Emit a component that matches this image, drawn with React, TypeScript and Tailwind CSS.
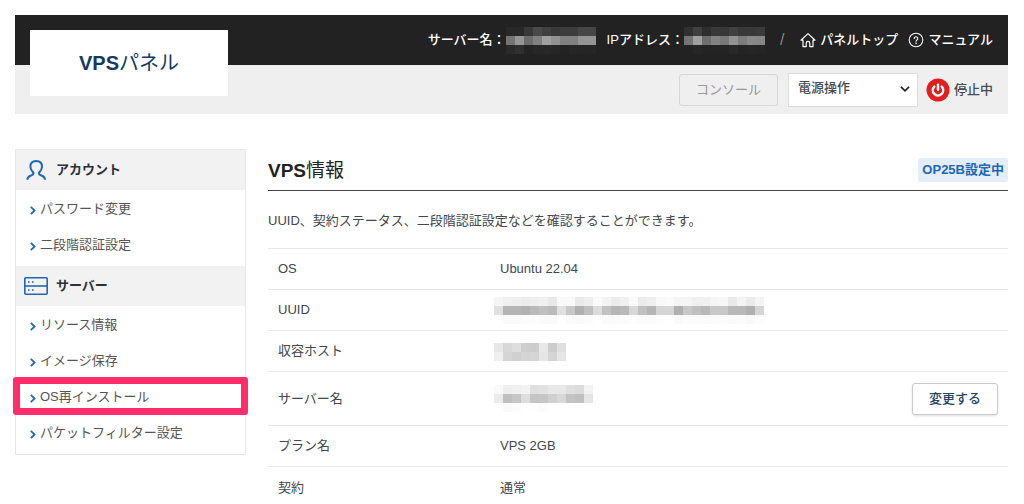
import { useState } from 'react';
import type { ReactNode } from 'react';

// Masked values, one hex grey level per block
const masks = {
  headerName: [
    '28 28 38 4a 40 38 3c 3c 46 46',
    '74 96 6c 80 a0 92 80 80 94 94',
    '2a 30 24 27 28 26 23 26 25 25',
  ],
  headerIp: [
    '30 40 2e 38 36 40 38 38 3a',
    '74 a0 6e 82 78 92 7c 88 86',
    '22 26 24 24 24 28 24 25 24',
  ],
  uuid: [
    'f5 f0 ee eb ee f0 e8 f9 f9 e9 ee fb f3 eb f0 fa eb ef f9 fb f5 f5 f0 f0 f5 f7 ea f4 eb f4',
    'e0 b5 b5 b2 ba bf ba e0 c8 b0 c0 dc c2 b6 ba d8 c0 b6 d5 d5 b0 c8 c0 b9 c8 c8 b8 b8 b0 d5',
    'ff fa fa fb fc fa fa ff fb f9 fc ff fb fa fb fd fb fb fd ff f9 fc fb fa fb fc fa fb f9 fc',
  ],
  host: ['e8 d8 de ce cc e8 cc df', 'ef d5 d0 d4 d5 e6 d5 e6'],
  serverName: [
    'f9 ee f0 f3 df e2 e8 e8 df dc f2',
    'eb c0 c6 de c5 c6 d0 d8 c3 c0 e5',
    'ff fa fc ff fe fb ff ff ff ff ff',
  ],
};

function Masked({ rows, label }: { rows: string[]; label: string }) {
  return (
    <span role="img" aria-label={label} className="inline-flex flex-col align-middle">
      {rows.map((row, y) => (
        <span key={y} className="flex">
          {row.split(' ').map((c, x) => (
            <span key={x} className="h-[9px] w-[9px]" style={{ backgroundColor: `#${c}${c}${c}` }} />
          ))}
        </span>
      ))}
    </span>
  );
}

function HomeIcon() {
  return (
    <svg className="h-4 w-4" viewBox="0 0 16 16" fill="none" stroke="currentColor" strokeWidth="1.2" strokeLinejoin="round" strokeLinecap="round">
      <path d="M3 8.200H1L8 1.600l7 6.600h-2v6.400H9.800v-3.400a1.800 1.800 0 0 0-3.600 0v3.400H3z" />
    </svg>
  );
}

function HelpIcon() {
  return (
    <svg className="h-4 w-4" viewBox="0 0 16 16" fill="none" stroke="currentColor" strokeWidth="1.1" strokeLinecap="round">
      <circle cx="8" cy="8" r="6.8" />
      <path d="M6.200 6.600a1.800 1.800 0 1 1 2.700 1.500c-.6.4-.9.700-.9 1.200" />
      <circle cx="8" cy="11.300" r=".3" fill="currentColor" />
    </svg>
  );
}

function PowerIcon() {
  return (
    <svg className="h-6 w-6" viewBox="0 0 24 24" fill="none" stroke="#fff" strokeWidth="2.4" strokeLinecap="round">
      <circle cx="12" cy="12" r="11.5" fill="#e0201f" stroke="none" />
      <path d="M8.3 8.6a5.2 5.2 0 1 0 7.4 0" />
      <path d="M12 6.6v5.2" />
    </svg>
  );
}

function UserIcon() {
  return (
    <svg className="h-6 w-6" viewBox="0 0 24 24" fill="none" stroke="#1f66b3" strokeWidth="2" strokeLinejoin="round">
      <path d="M3.400 21.800c0-2.600 1-3.400 3.100-4.100 1.800-.6 3-1.100 3-2.400 0-.9-.5-1.300-1.300-2.100C7 12 6.400 10.600 6.400 8.600 6.400 5 8.600 3 12.200 3S18 5 18 8.600c0 2-.6 3.400-1.800 4.600-.8.800-1.300 1.200-1.300 2.100 0 1.300 1.200 1.800 3 2.400 2.100.7 3.100 1.500 3.100 4.100" />
    </svg>
  );
}

function ServerIcon() {
  return (
    <svg className="h-6 w-6" viewBox="0 0 24 24" fill="none" stroke="#1f66b3" strokeWidth="1.6">
      <rect x="0.800" y="3.800" width="22.400" height="16.400" rx="1" />
      <path d="M1 12h22" />
      <path d="M4 8h1.600M8 8h1.600M4 16h1.600M8 16h1.600" />
    </svg>
  );
}

function ChevronIcon() {
  return (
    <svg className="mt-0.5 h-[9px] w-1.5" viewBox="0 0 6 9" fill="none" stroke="#2468b4" strokeWidth="1.8">
      <path d="M.8.800 4.600 4.500.8 8.200" />
    </svg>
  );
}

const menu = [
  { title: 'アカウント', icon: <UserIcon />, items: ['パスワード変更', '二段階認証設定'] },
  {
    title: 'サーバー',
    icon: <ServerIcon />,
    items: ['リソース情報', 'イメージ保存', 'OS再インストール', 'パケットフィルター設定'],
  },
];

const HIGHLIGHTED = 'OS再インストール';

function Header() {
  const [power, setPower] = useState('');

  return (
    <header className="relative">
      <div className="flex h-[50px] items-center justify-end bg-[#222] pr-[15px] text-[13px] font-medium text-white">
        <span>サーバー名：</span>
        <Masked rows={masks.headerName} label="サーバー名" />
        <span className="ml-[11px]">IPアドレス：</span>
        <Masked rows={masks.headerIp} label="IPアドレス" />
        <span className="mr-4 ml-[15px] text-base text-[#888]">/</span>
        <a href="#top" className="flex items-center gap-1">
          <HomeIcon />
          パネルトップ
        </a>
        <a href="#manual" className="ml-[10px] flex items-center gap-1">
          <HelpIcon />
          マニュアル
        </a>
      </div>

      <div className="flex h-[49px] items-center justify-end bg-[#efefef] pr-[15px] text-[13px] text-[#444b52]">
        <button type="button" disabled className="h-8 rounded-[3px] border border-[#d6d6d6] px-4 text-[#999]">
          コンソール
        </button>
        <div className="relative ml-[10px]">
          <select
            aria-label="電源操作"
            value={power}
            onChange={(e) => setPower(e.target.value)}
            className="h-[34px] w-[130px] appearance-none border border-[#ddd] bg-white pb-1 pl-[9px] font-medium"
          >
            <option value="">電源操作</option>
            <option value="start">起動</option>
            <option value="stop">停止</option>
          </select>
          <svg className="pointer-events-none absolute top-3 right-2 h-2 w-[10px]" viewBox="0 0 10 8" fill="none" stroke="#222" strokeWidth="1.700">
            <path d="M1 1.800 5 5.800 9 1.800" />
          </svg>
        </div>
        <span className="ml-2 flex items-center gap-1 font-medium">
          <PowerIcon />
          停止中
        </span>
      </div>

      {/* Logo plate sits over both bars */}
      <a
        href="#"
        className="absolute top-[15px] left-[15px] flex h-[66px] w-[198px] items-center justify-center bg-white text-[20px] text-[#163a5f]"
      >
        <b>VPS</b>パネル
      </a>
    </header>
  );
}

function Sidebar() {
  return (
    <nav className="w-[231px] shrink-0 border border-[#e8e8e8]">
      {menu.map((section) => (
        <section key={section.title}>
          <h2 className="flex h-10 items-center gap-2 bg-[#f2f2f2] pl-2 text-[13px] font-bold text-[#2b3138]">
            {section.icon}
            {section.title}
          </h2>
          <ul className="pt-px pb-[3px]">
            {section.items.map((item) => (
              <li key={item} className="relative">
                <a href="#" className="flex h-9 items-center gap-1 pl-[14px] text-[13px] text-[#555]">
                  <ChevronIcon />
                  {item}
                </a>
                {item === HIGHLIGHTED && (
                  <span className="pointer-events-none absolute -inset-x-[3px] -top-0.5 bottom-0 rounded-[3px] border-[7px] border-[#ff2d6c]" />
                )}
              </li>
            ))}
          </ul>
        </section>
      ))}
    </nav>
  );
}

function Row({ label, tall, children }: { label: string; tall?: boolean; children: ReactNode }) {
  return (
    <tr className="border-t border-[#e8e8e8]">
      <th scope="row" className="w-[30%] pl-[10px] text-left font-normal">
        {label}
      </th>
      <td className={tall ? 'h-[54px] px-[10px]' : 'h-[41px] px-[10px]'}>{children}</td>
    </tr>
  );
}

export default function App() {
  return (
    <div className="bg-white pt-[15px] pr-4 pl-[15px] font-['Liberation_Sans','Noto_Sans_CJK_JP',sans-serif]">
      <Header />

      <div className="mt-[35px] flex items-start gap-[22px]">
        <Sidebar />

        <main className="min-w-0 flex-1 text-[13px] text-[#40474e]">
          <div className="flex h-[42px] items-center justify-between border-b border-[#444]">
            <h1 className="pt-[3px] text-[19px] text-[#222]">
              <b>VPS</b>情報
            </h1>
            <span className="rounded-[2px] bg-[#e4eef9] px-1 py-0.5 leading-5 font-bold text-[#1f66b3]">
              OP25B設定中
            </span>
          </div>

          <p className="pt-5 pb-[17px] leading-5">UUID、契約ステータス、二段階認証設定などを確認することができます。</p>

          <table className="w-full border-collapse">
            <tbody>
              <Row label="OS">Ubuntu 22.04</Row>
              <Row label="UUID">
                <span className="-ml-1.5">
                  <Masked rows={masks.uuid} label="UUID" />
                </span>
              </Row>
              <Row label="収容ホスト">
                <span className="-ml-1.5">
                  <Masked rows={masks.host} label="収容ホスト" />
                </span>
              </Row>
              <Row label="サーバー名" tall>
                <div className="flex items-center justify-between">
                  <span className="-ml-1.5">
                    <Masked rows={masks.serverName} label="サーバー名" />
                  </span>
                  <button
                    type="button"
                    className="h-8 rounded-[3px] border border-[#ccc] bg-white px-4 font-medium text-[#1f4468] shadow"
                  >
                    変更する
                  </button>
                </div>
              </Row>
              <Row label="プラン名">VPS 2GB</Row>
              <Row label="契約">通常</Row>
            </tbody>
          </table>
        </main>
      </div>
    </div>
  );
}
